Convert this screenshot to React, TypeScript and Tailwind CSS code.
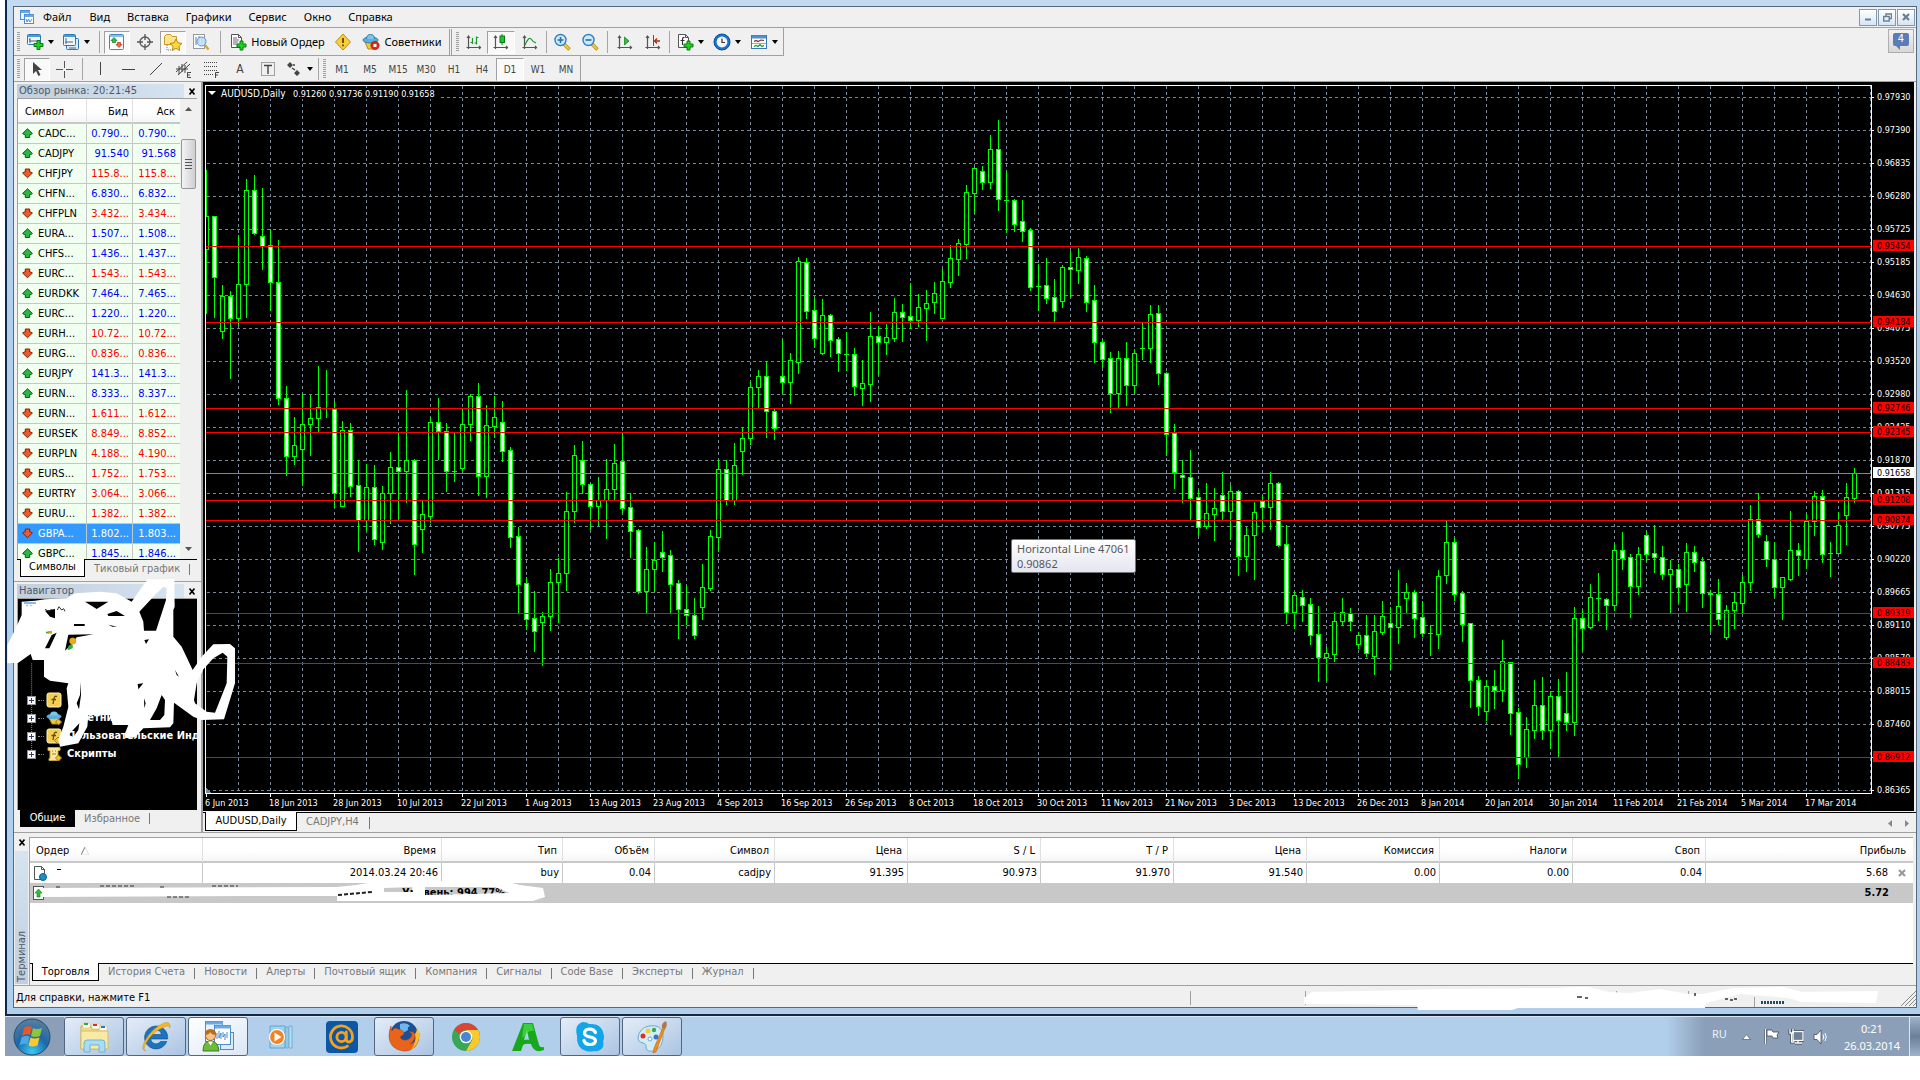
import React from "react";

const UI = "font-['DejaVu_Sans_Condensed','DejaVu_Sans',sans-serif]";
const SEGOE = "font-['Noto_Sans',sans-serif]";

/* ---------- chart data: [high, top, bottom, low, kind] ; kind 1 = bearish (filled), 0 = bullish ---------- */
type Bar = [number, number, number, number, number];
type Segment = { base: number; unit: number; bars: Bar[] };

const SEGMENTS: Segment[] = [
  {
    base: -2,
    unit: 2.45,
    bars: [
      [220, 332, 413, 571, 0], [332, 332, 482, 581, 1], [502, 528, 616, 632, 0], [517, 528, 582, 730, 1],
      [380, 500, 582, 600, 0], [243, 270, 501, 581, 0], [233, 270, 374, 377, 1], [265, 383, 406, 463, 1],
      [366, 405, 496, 563, 1], [392, 496, 778, 794, 1], [750, 778, 920, 968, 1], [826, 895, 920, 941, 0],
      [768, 844, 903, 992, 0], [771, 829, 844, 919, 0], [701, 802, 827, 862, 0], [710, 803, 803, 826, 0],
      [786, 805, 1013, 1045, 1], [835, 858, 1043, 1043, 0], [840, 858, 994, 1018, 1], [931, 993, 1079, 1154, 1],
      [941, 998, 1079, 1103, 0], [943, 998, 1124, 1137, 1], [995, 1013, 1133, 1149, 0], [911, 949, 1013, 1085, 0],
      [864, 949, 957, 1075, 1], [759, 932, 957, 1033, 0], [929, 932, 1138, 1210, 1], [1032, 1064, 1101, 1156, 0],
      [826, 839, 1067, 1083, 0], [779, 839, 861, 929, 1], [840, 861, 959, 1007, 1], [864, 958, 958, 982, 0],
      [807, 844, 950, 955, 0], [770, 775, 844, 881, 0], [742, 775, 969, 1017, 1], [796, 846, 969, 1022, 0],
      [775, 826, 847, 875, 0], [786, 839, 908, 933, 1], [899, 907, 1119, 1144, 1], [1095, 1118, 1234, 1303, 1],
      [1218, 1233, 1320, 1344, 1], [1252, 1319, 1351, 1399, 1], [1303, 1312, 1327, 1433, 0], [1198, 1230, 1312, 1347, 0],
      [1171, 1208, 1231, 1328, 0], [1009, 1056, 1209, 1249, 0], [894, 919, 1057, 1083, 0], [884, 932, 991, 1012, 1],
      [987, 991, 1043, 1100, 1], [973, 1030, 1043, 1090, 0], [929, 1001, 1030, 1122, 0], [892, 939, 1001, 1027, 0],
      [865, 934, 1048, 1058, 1], [1012, 1047, 1104, 1169, 1], [1100, 1103, 1253, 1258, 1], [1144, 1198, 1253, 1306, 0],
      [1131, 1177, 1199, 1252, 0], [1105, 1157, 1168, 1203, 1], [1151, 1164, 1234, 1306, 1], [1225, 1233, 1297, 1367, 1],
      [1239, 1297, 1311, 1333, 1], [1269, 1311, 1359, 1367, 1], [1186, 1243, 1290, 1321, 0], [1102, 1118, 1244, 1249, 0],
      [931, 954, 1119, 1154, 0], [931, 954, 1030, 1039, 1], [889, 944, 1030, 1039, 0], [853, 876, 910, 965, 0],
      [739, 751, 876, 892, 0], [710, 726, 751, 804, 0], [689, 726, 810, 875, 1], [805, 811, 852, 880, 1],
      [635, 724, 741, 764, 1], [670, 686, 741, 791, 0], [434, 444, 690, 718, 0], [436, 447, 565, 583, 1],
      [533, 564, 631, 655, 1], [537, 576, 668, 671, 0], [573, 576, 636, 676, 1], [630, 635, 670, 713, 1],
      [617, 671, 671, 710, 0], [657, 672, 749, 771, 1], [686, 743, 754, 796, 0], [568, 626, 744, 786, 0],
      [603, 626, 643, 720, 1], [598, 630, 643, 671, 0], [534, 569, 631, 639, 0], [549, 569, 580, 639, 1],
      [497, 578, 587, 607, 1], [524, 557, 588, 603, 0], [514, 547, 558, 637, 0], [495, 522, 545, 571, 0],
      [463, 493, 582, 582, 0], [404, 437, 494, 507, 0], [390, 400, 438, 478, 0], [257, 275, 401, 436, 0],
      [213, 216, 276, 325, 0], [211, 223, 251, 267, 1], [135, 170, 251, 265, 0], [98, 170, 291, 318, 1],
      [223, 293, 293, 372, 0], [292, 294, 354, 370, 1], [293, 346, 369, 394, 1], [363, 367, 506, 514, 1],
      [451, 504, 504, 563, 0], [436, 503, 533, 546, 1], [488, 532, 567, 590, 1], [453, 459, 541, 556, 0],
      [419, 459, 464, 530, 1], [412, 434, 465, 497, 0], [431, 437, 543, 567, 1], [502, 540, 643, 691, 1],
    ],
  },
  {
    base: 158,
    unit: 2.613,
    bars: [
      [259, 267, 310, 332, 1], [293, 309, 399, 449, 1], [290, 309, 399, 436, 0], [267, 309, 378, 431, 1],
      [285, 296, 378, 397, 0], [216, 283, 283, 311, 0], [170, 194, 282, 319, 0], [170, 192, 347, 376, 1],
      [345, 348, 506, 562, 1], [481, 504, 605, 648, 1], [576, 614, 620, 685, 1], [549, 619, 673, 732, 1],
      [653, 672, 749, 771, 1], [635, 713, 747, 753, 0], [648, 700, 715, 784, 0], [606, 667, 707, 732, 1],
      [640, 657, 707, 781, 0], [652, 657, 825, 875, 1], [749, 772, 825, 865, 0], [685, 711, 772, 886, 0],
      [666, 681, 697, 760, 1], [606, 635, 697, 755, 0], [632, 636, 796, 799, 1], [745, 795, 971, 1001, 1],
      [919, 928, 971, 1014, 0], [915, 934, 953, 996, 1], [936, 951, 1031, 1056, 1], [956, 1030, 1089, 1152, 1],
      [1064, 1080, 1089, 1151, 0], [972, 996, 1081, 1100, 0], [936, 973, 995, 1004, 0], [962, 974, 995, 1019, 1],
      [1023, 1033, 1055, 1066, 0], [980, 1033, 1078, 1087, 1], [980, 1022, 1087, 1134, 0], [943, 983, 1023, 1030, 0],
      [959, 1002, 1010, 1120, 1], [862, 957, 1010, 1053, 0], [896, 921, 935, 972, 0], [915, 921, 987, 1037, 1],
      [943, 986, 1026, 1035, 1], [1006, 1026, 1026, 1085, 0], [862, 879, 1029, 1066, 0], [734, 788, 875, 896, 0],
      [779, 788, 924, 941, 1], [917, 923, 1003, 1048, 1], [1001, 1002, 1151, 1219, 1], [1139, 1151, 1217, 1241, 1],
      [1149, 1166, 1230, 1254, 0], [1124, 1166, 1175, 1223, 1], [1046, 1101, 1175, 1205, 0], [1102, 1102, 1235, 1291, 1],
      [1223, 1234, 1370, 1406, 1], [1247, 1278, 1352, 1377, 0], [1150, 1216, 1280, 1301, 0],
    ],
  },
  {
    base: 338,
    unit: 3,
    bars: [
      [771, 856, 929, 957, 1], [814, 829, 929, 984, 0], [777, 829, 899, 1007, 1], [756, 880, 905, 930, 1],
      [561, 595, 905, 945, 0], [567, 595, 623, 690, 1], [492, 532, 622, 624, 0], [459, 534, 534, 600, 0],
      [534, 538, 554, 627, 1], [371, 391, 554, 570, 0], [336, 391, 413, 447, 1], [402, 412, 497, 591, 1],
      [381, 403, 499, 522, 0], [333, 346, 401, 420, 1], [315, 400, 412, 456, 1], [378, 412, 461, 477, 1],
      [420, 448, 461, 576, 0], [432, 448, 502, 546, 1], [369, 397, 493, 573, 0], [378, 397, 425, 454, 1],
      [411, 424, 518, 560, 1], [510, 518, 523, 634, 0], [477, 523, 596, 612, 1], [555, 571, 650, 657, 0],
      [516, 547, 571, 624, 0], [465, 487, 550, 576, 0], [255, 298, 487, 510, 0], [219, 298, 341, 350, 1],
      [345, 364, 418, 437, 1], [365, 418, 502, 532, 1], [471, 472, 502, 597, 0], [273, 391, 476, 480, 0],
      [369, 391, 406, 465, 1], [281, 304, 418, 443, 0], [213, 229, 304, 345, 0], [210, 229, 401, 426, 1],
      [366, 398, 398, 468, 0], [275, 316, 398, 400, 0], [189, 232, 284, 372, 0], [144, 160, 233, 245, 0],
    ],
  },
];

const CANDLES = SEGMENTS.flatMap((s) =>
  s.bars.map(([h, t, b, l, kind]) => ({
    high: Math.round(s.base + h / s.unit),
    top: Math.round(s.base + t / s.unit),
    bottom: Math.round(s.base + b / s.unit),
    low: Math.round(s.base + l / s.unit),
    bearish: kind === 1,
  })),
);

const PRICES = [
  "0.97930", "0.97390", "0.96835", "0.96280", "0.95725", "0.95185", "0.94630", "0.94075", "0.93520", "0.92980", "0.92425",
  "0.91870", "0.91315", "0.90775", "0.90220", "0.89665", "0.89110", "0.88570", "0.88015", "0.87460", "0.86905", "0.86365",
];
const DATES = [
  "6 Jun 2013", "18 Jun 2013", "28 Jun 2013", "10 Jul 2013", "22 Jul 2013", "1 Aug 2013", "13 Aug 2013", "23 Aug 2013",
  "4 Sep 2013", "16 Sep 2013", "26 Sep 2013", "8 Oct 2013", "18 Oct 2013", "30 Oct 2013", "11 Nov 2013", "21 Nov 2013",
  "3 Dec 2013", "13 Dec 2013", "26 Dec 2013", "8 Jan 2014", "20 Jan 2014", "30 Jan 2014", "11 Feb 2014", "21 Feb 2014",
  "5 Mar 2014", "17 Mar 2014",
];
const LEVELS: [number, string][] = [
  [164, "0.95454"], [240, "0.94184"], [326, "0.92746"], [350, "0.92345"], [418, "0.91208"],
  [438, "0.90874"], [531, "0.89319"], [581, "0.88483"], [675, "0.86912"],
];

function Chart() {
  return (
    <svg
      className="absolute inset-0 h-full w-full bg-black"
      viewBox="0 0 1711 729"
      preserveAspectRatio="none"
      role="img"
      aria-label="AUDUSD,Daily"
    >
      <g shapeRendering="crispEdges" fill="none">
        <g stroke="#778899" strokeDasharray="3 3">
          {Array.from({ length: 52 }, (_, i) => (
            <path key={i} d={`M${35.5 + 32 * i} 4V710`} />
          ))}
          {PRICES.map((p, i) => (
            <path key={p} d={`M4 ${15.5 + 33 * i}H1668`} />
          ))}
        </g>
        {CANDLES.map((c, i) => {
          const x = 3 + 8 * i;
          const h = c.bottom - c.top;
          return (
            <g key={i}>
              <path d={`M${x + 0.5} ${c.high}V${c.low + 1}`} stroke="#00ff00" />
              {h < 1 ? (
                <path d={`M${x - 2} ${c.top + 0.5}H${x + 3}`} stroke="#00ff00" />
              ) : (
                <rect x={x - 1.5} y={c.top + 0.5} width={4} height={h} stroke="#00ff00" fill={c.bearish ? "#ffffff" : "#000000"} />
              )}
            </g>
          );
        })}
        <path d="M3 391.5H1668" stroke="#778899" />
        {LEVELS.map(([y]) => (
          <path key={y} d={`M3 ${y + 0.5}H1668`} stroke="#ff0000" />
        ))}
        <path d="M0 4V729H3V4" fill="#000" />
        <path d="M2.5 711V3.5H1668.5V711.5H2" stroke="#fff" />
        {PRICES.map((p, i) => (
          <path key={p} d={`M1668 ${15.5 + 33 * i}h3`} stroke="#fff" />
        ))}
        {DATES.map((d, i) => (
          <path key={d} d={`M${3.5 + 64 * i} 712v3`} stroke="#fff" />
        ))}
        <path d="M3 705l5 6H3Z" fill="#778899" />
      </g>
      <g className={UI} fontSize="9" fill="#fff">
        {PRICES.map((p, i) => (
          <text key={p} x={1674} y={18 + 33 * i}>{p}</text>
        ))}
        {DATES.map((d, i) => (
          <text key={d} x={2 + 64 * i} y={724}>{d}</text>
        ))}
      </g>
      {LEVELS.map(([y, label]) => (
        <g key={label} className={UI} fontSize="9">
          <rect x={1670} y={y - 6} width={41} height={11} fill="#f00" shapeRendering="crispEdges" />
          <text x={1674} y={y + 3} fill="#000">{label}</text>
        </g>
      ))}
      <g className={UI} fontSize="9">
        <rect x={1670} y={385} width={41} height={11} fill="#fff" shapeRendering="crispEdges" />
        <text x={1674} y={394} fill="#000">0.91658</text>
      </g>
      <rect x="4" y="6" width="232" height="11" fill="#000" />
      <path d="M5 9h8l-4 4Z" fill="#fff" />
      <text className={UI} x="18" y="15" fontSize="10" fill="#fff">AUDUSD,Daily</text>
      <text className={UI} x="90" y="15" fontSize="9" fill="#fff">0.91260 0.91736 0.91190 0.91658</text>
    </svg>
  );
}

/* ---------- toolbar icons ---------- */
const Svg = ({ children, w = 18, h = 18, vb }: { children: React.ReactNode; w?: number; h?: number; vb?: string }) => (
  <svg width={w} height={h} viewBox={vb ?? `0 0 ${w} ${h}`} fill="none" aria-hidden="true" className="shrink-0">
    {children}
  </svg>
);
const Drop = () => (
  <Svg w={6} h={4}><path d="M0 0h6L3 4Z" fill="#000" /></Svg>
);
const Plus = ({ x, y }: { x: number; y: number }) => (
  <path transform={`translate(${x} ${y})`} d="M3.5 0.5h3v3h3v3h-3v3h-3v-3h-3v-3h3Z" fill="#1fd01f" stroke="#0a7d12" />
);
const IcNewChart = () => (
  <Svg><rect x="1.5" y="1.5" width="13" height="10" rx="1" fill="#eef5fc" stroke="#2a78b4" /><path d="M2 3h12" stroke="#4c9ad4" strokeWidth="2" /><path d="M4 5v5M3 8h9M4 6l-1 1M11 7l1 1-1 1" stroke="#54677a" /><Plus x={7.5} y={7} /></Svg>
);
const IcProfiles = () => (
  <Svg><rect x="4.5" y="5.500" width="12" height="11" rx="1" fill="#dbeaf8" stroke="#2a78b4" /><rect x="1.500" y="1.500" width="12" height="11" rx="1" fill="#eef5fc" stroke="#2a78b4" /><path d="M2 3h11" stroke="#4c9ad4" strokeWidth="2" /><path d="M4 5v6M3 9h8M7 15h7" stroke="#54677a" /></Svg>
);
const IcMarket = () => (
  <Svg><rect x="1.500" y="1.500" width="14" height="15" rx="1" fill="#fff" stroke="#3c88c8" /><path d="M2 3h13" stroke="#8cc0e8" strokeWidth="2" /><path d="M6 4.500l3 3H7.500v2h-3v-2H3Z" fill="#2fbf3a" stroke="#0a7d12" strokeWidth=".7" /><path d="M11 14.500l3-3h-1.500v-2h-3v2H8Z" fill="#f26a45" stroke="#b02a10" strokeWidth=".7" /></Svg>
);
const IcCross = () => (
  <Svg><circle cx="9" cy="9" r="5" stroke="#555" strokeWidth="1.300" /><path d="M9 1v6M9 11v6M1 9h6M11 9h6" stroke="#555" strokeWidth="1.300" /></Svg>
);
const IcNavigator = () => (
  <Svg w={20}><path d="M1.500 3.500l2-2h4l2 2h4v8h-12Z" fill="#ffe48a" stroke="#c9982a" /><path d="M4 12v5h5" stroke="#777" strokeDasharray="1 1" /><path d="M13 6l1.900 3.800 4.100.6-3 2.900.7 4.100-3.700-2-3.700 2 .7-4.100-3-2.900 4.100-.6Z" fill="#ffd83c" stroke="#b98712" /></Svg>
);
const IcTester = () => (
  <Svg><rect x="1.500" y="1.500" width="11" height="14" fill="#fdfdfd" stroke="#999" /><path d="M4 4v8M7 3v7M10 5v6" stroke="#5580a8" /><circle cx="9.500" cy="8.500" r="4.500" fill="#bfe3fa" fillOpacity=".8" stroke="#5a92c0" /><path d="M13 12l3.500 4.500" stroke="#d9a520" strokeWidth="2.200" /></Svg>
);
const IcOrder = ({ letter }: { letter?: boolean }) => (
  <Svg><path d="M2.500 1.500h7l3 3v10h-10Z" fill="#fff" stroke="#555" /><path d="M9.500 1.500v3h3" stroke="#555" />{letter ? <path d="M8.500 4.500q-2-.5-2 2V12M4.500 7.500h4" stroke="#333" strokeWidth="1.200" /> : <path d="M4 5h4M4 7h6M4 9h5M4 11h4" stroke="#667" />}<Plus x={7.500} y={7.500} /></Svg>
);
const IcWarn = () => (
  <Svg w={16}><path d="M8 1L15.500 9 8 17 .5 9Z" fill="#f7cf3a" stroke="#c28d10" /><path d="M8 5v5M8 11.500v1.800" stroke="#5b3d00" strokeWidth="1.700" /></Svg>
);
const IcAdvisor = () => (
  <Svg w={18}><path d="M3 9l3 7h5l3-7Z" fill="#f3c93c" stroke="#b98712" /><ellipse cx="8.500" cy="7" rx="7.500" ry="3" fill="#5cb0dc" stroke="#2d7dac" /><path d="M4.500 6q0-4.500 4-4.500t4 4.500" fill="#7cc6ea" stroke="#2d7dac" /><circle cx="13" cy="12.500" r="4.200" fill="#e0281c" stroke="#a5140c" strokeWidth=".6" /><rect x="11.500" y="11" width="3" height="3" fill="#fff" /></Svg>
);
const Axes = () => <path d="M3.500 3v13M1.500 14.500h14M2 5l1.500-2L5 5M14 13l1.500 1.500L14 16" stroke="#555" strokeWidth="1.200" />;
const IcBars = () => (
  <Svg><Axes /><path d="M7.500 5v6M7.500 9.500h-2M11.500 3.500v8M11.500 4.500h2M9.500 10h2" stroke="#159a2c" strokeWidth="1.200" /></Svg>
);
const IcCandles = () => (
  <Svg><Axes /><path d="M10 1v11" stroke="#0a7d12" /><rect x="8" y="3" width="4.500" height="6.500" fill="#1fc53a" stroke="#0a7d12" /></Svg>
);
const IcLine = () => (
  <Svg><Axes /><path d="M4 12Q8 3 10 6T15 10" stroke="#159a2c" strokeWidth="1.200" /></Svg>
);
const IcZoom = ({ plus }: { plus?: boolean }) => (
  <Svg><path d="M11 11l5.500 5.500" stroke="#b98712" strokeWidth="3.400" /><path d="M11 11l5 5" stroke="#f3cc45" strokeWidth="1.800" /><circle cx="7.500" cy="7" r="5.500" fill="#cdeafa" stroke="#2f80c2" strokeWidth="1.400" /><path d={plus ? "M4.500 7h6M7.500 4v6" : "M4.500 7h6"} stroke="#2b6da8" strokeWidth="1.600" /></Svg>
);
const IcScroll = () => (<Svg><Axes /><path d="M8.500 4l4.500 4-4.500 4Z" fill="#2fbf3a" stroke="#0a7d12" strokeWidth=".7" /></Svg>);
const IcShift = () => (<Svg><Axes /><path d="M9.500 2v11" stroke="#25649c" /><path d="M16 8h-5M13 5.500L10.500 8l2.500 2.500" stroke="#b02a10" strokeWidth="1.300" /></Svg>);
const IcClock = () => (<Svg><circle cx="9" cy="9" r="8" fill="#1d74cf" stroke="#0b4a94" /><circle cx="9" cy="9" r="5.400" fill="#f2f7fc" /><path d="M9 5.500V9.500h3" stroke="#333" strokeWidth="1.200" /></Svg>);
const IcTemplate = () => (<Svg><rect x="1.500" y="2.500" width="15" height="13" fill="#fff" stroke="#3a78b5" /><path d="M2 4h14" stroke="#4c90d0" strokeWidth="3" /><path d="M4 8.500l2-1 2 1 3-1.500 3 .5" stroke="#8b2a12" strokeWidth="1.200" /><path d="M2 10.500h14" stroke="#9ab" /><path d="M4 13.500l2-1 2 1 2-2 2 2 2-1" stroke="#159a2c" strokeWidth="1.200" /></Svg>);

type ToolProps = { label: string; w: string; pressed?: boolean; children: React.ReactNode };
const Tool = ({ label, w, pressed, children }: ToolProps) => (
  <button
    type="button"
    aria-label={label}
    className={`${w} flex h-[23px] shrink-0 items-center justify-center gap-[4px] ${pressed ? "border border-[#a0a0a0] border-r-white border-b-white bg-[#f9f9f9]" : ""}`}
  >
    {children}
  </button>
);
const Sep = ({ w }: { w: string }) => (
  <span className={`${w} flex h-[22px] shrink-0 justify-center`}><span className="h-full w-px bg-[#a5a5a5]" /></span>
);
const Grip = () => (
  <span className="flex h-[20px] w-2 shrink-0 justify-center">
    <span className="h-full w-[3px] bg-[repeating-linear-gradient(to_bottom,#a0a0a0_0px,#a0a0a0_1px,#f0f0f0_1px,#f0f0f0_2px)]" />
  </span>
);

function Toolbars() {
  return (
    <div className="flex h-[54px] shrink-0 items-start justify-between border-b border-[#a0a0a0]">
      <div className="flex flex-col">
        <div className="flex h-[28px] items-center border-r border-b border-[#a0a0a0] pt-px">
          <Grip />
          <Tool label="Новый график" w="w-9"><IcNewChart /><Drop /></Tool>
          <Tool label="Профили" w="w-9"><IcProfiles /><Drop /></Tool>
          <Sep w="w-[10px]" />
          <Tool label="Обзор рынка" w="w-[26px]" pressed><IcMarket /></Tool>
          <Tool label="Окно данных" w="w-[30px]"><IcCross /></Tool>
          <Tool label="Навигатор" w="w-[26px]" pressed><IcNavigator /></Tool>
          <Tool label="Тестер стратегий" w="w-[30px]"><IcTester /></Tool>
          <Sep w="w-2" />
          <Tool label="Новый Ордер" w="w-[106px]"><IcOrder /><span className={`${SEGOE} text-[11px]`}>Новый Ордер</span></Tool>
          <Tool label="MetaEditor" w="w-[26px]"><IcWarn /></Tool>
          <Tool label="Советники" w="w-[92px]"><IcAdvisor /><span className={`${SEGOE} text-[11px]`}>Советники</span></Tool>
          <span className="flex h-full w-[5px] justify-center gap-px"><span className="w-px bg-[#a0a0a0]" /><span className="w-px bg-[#a0a0a0]" /></span>
          <Grip />
          <Tool label="Бары" w="w-[26px]"><IcBars /></Tool>
          <Tool label="Японские свечи" w="w-[28px]" pressed><IcCandles /></Tool>
          <Tool label="Линия" w="w-[29px]"><IcLine /></Tool>
          <Sep w="w-[4px]" />
          <Tool label="Увеличить" w="w-[28px]"><IcZoom plus /></Tool>
          <Tool label="Уменьшить" w="w-[28px]"><IcZoom /></Tool>
          <Sep w="w-[6px]" />
          <Tool label="Автопрокрутка" w="w-[30px]"><IcScroll /></Tool>
          <Tool label="Сдвиг графика" w="w-[26px]"><IcShift /></Tool>
          <Sep w="w-[6px]" />
          <Tool label="Индикаторы" w="w-9"><IcOrder letter /><Drop /></Tool>
          <Tool label="Периоды" w="w-[37px]"><IcClock /><Drop /></Tool>
          <Tool label="Шаблоны" w="w-[38px]"><IcTemplate /><Drop /></Tool>
        </div>
        <div className="flex h-[25px] items-center self-start border-r border-[#a0a0a0] pt-px">
          <Grip />
          <span className="w-[2px]" />
          <Tool label="Курсор" w="w-[26px]" pressed><Svg><path d="M5 2v12l3-3 2.500 5 2-1-2.500-5H14Z" fill="#444" /></Svg></Tool>
          <Tool label="Перекрестие" w="w-[28px]"><Svg><path d="M9.500 1v7M9.500 11v7M1 9.500h7M11 9.500h7" stroke="#555" /></Svg></Tool>
          <Sep w="w-2" />
          <Tool label="Вертикальная линия" w="w-[28px]"><Svg><path d="M9.500 2v13" stroke="#444" /></Svg></Tool>
          <Tool label="Горизонтальная линия" w="w-[28px]"><Svg><path d="M3 9.500h13" stroke="#444" /></Svg></Tool>
          <Tool label="Трендовая линия" w="w-[28px]"><Svg><path d="M3 15L15 3" stroke="#444" /></Svg></Tool>
          <Tool label="Равноудаленный канал" w="w-[28px]"><Svg><path d="M1 12L12 2M3 15L15 4M4 6v8M7 4v8M10 5v8M1 9h12" stroke="#444" /><path d="M16 12.500h-3.500v5H16M12.500 15H15" stroke="#444" /></Svg></Tool>
          <Tool label="Линии Фибоначчи" w="w-[28px]"><Svg><path d="M1 2.500h14M1 6.500h14M1 10.500h14M1 14.500h9" stroke="#444" strokeDasharray="1 1" /><path d="M16 12.500h-3.500V18M12.500 15H15" stroke="#444" /></Svg></Tool>
          <Tool label="Текст" w="w-[28px]"><span className={`${UI} text-[12px] text-[#444]`}>A</span></Tool>
          <Tool label="Текстовая метка" w="w-[28px]"><Svg><rect x="2.500" y="2.500" width="13" height="13" stroke="#555" strokeDasharray="1 1" /><path d="M5 5.500h8M9 5v9" stroke="#444" strokeWidth="1.400" /></Svg></Tool>
          <Tool label="Стрелки" w="w-[34px]"><Svg><path d="M5 2l3 3-3 3-3-3ZM12 10l3 3-3 3-3-3Z" fill="#444" /><path d="M7 8l3 2M8 5h2" stroke="#444" strokeWidth="1.500" /></Svg><Drop /></Tool>
          <Sep w="w-[4px]" />
          <Grip />
          {["M1", "M5", "M15", "M30", "H1", "H4", "D1", "W1", "MN"].map((t) => (
            <Tool key={t} label={t} w="w-[28px]" pressed={t === "D1"}>
              <span className={`${UI} text-[10px] text-[#444]`}>{t}</span>
            </Tool>
          ))}
        </div>
      </div>
      <button type="button" aria-label="Сообщения" className="mt-[1px] mr-[2px] flex h-6 w-[26px] items-center justify-center border border-[#adadad] bg-linear-to-b from-[#f2f2f2] to-[#d8d8d8]">
        <span className="flex flex-col items-start">
          <span className={`${UI} flex h-[13px] w-4 items-center justify-center rounded-[2px] bg-[#5b7db5] text-[11px] text-white`}>4</span>
          <Svg w={8} h={4}><path d="M3 0h4v4Z" fill="#5b7db5" /></Svg>
        </span>
      </button>
    </div>
  );
}

/* ---------- left dock ---------- */
const QUOTES: [boolean, string, string, string][] = [
  [true, "CADC...", "0.790...", "0.790..."], [true, "CADJPY", "91.540", "91.568"], [false, "CHFJPY", "115.8...", "115.8..."],
  [true, "CHFN...", "6.830...", "6.832..."], [false, "CHFPLN", "3.432...", "3.434..."], [true, "EURA...", "1.507...", "1.508..."],
  [true, "CHFS...", "1.436...", "1.437..."], [false, "EURC...", "1.543...", "1.543..."], [true, "EURDKK", "7.464...", "7.465..."],
  [true, "EURC...", "1.220...", "1.220..."], [false, "EURH...", "10.72...", "10.72..."], [false, "EURG...", "0.836...", "0.836..."],
  [true, "EURJPY", "141.3...", "141.3..."], [true, "EURN...", "8.333...", "8.337..."], [false, "EURN...", "1.611...", "1.612..."],
  [false, "EURSEK", "8.849...", "8.852..."], [false, "EURPLN", "4.188...", "4.190..."], [false, "EURS...", "1.752...", "1.753..."],
  [false, "EURTRY", "3.064...", "3.066..."], [false, "EURU...", "1.382...", "1.382..."], [false, "GBPA...", "1.802...", "1.803..."],
  [true, "GBPC...", "1.845...", "1.846..."],
];

const Arrow = ({ up }: { up: boolean }) => (
  <Svg w={11} h={11}>
    {up ? (
      <path d="M5.500 .8L10.400 5.500 8.800 6.500H7.700V9.500H3.300V6.500H2.200L.6 5.500Z" fill="#2fb544" stroke="#0b5c18" />
    ) : (
      <path d="M5.500 9.700L10.400 5 8.800 4H7.700V1H3.300V4H2.200L.6 5Z" fill="#ee5a2c" stroke="#84200a" />
    )}
  </Svg>
);

const CloseX = () => (
  <Svg w={6} h={7}><path d="M.5 .5l5 6M5.500 .5l-5 6" stroke="#000" strokeWidth="1.600" /></Svg>
);

function DockTitle({ text }: { text: string }) {
  return (
    <div className="flex h-[14px] shrink-0 items-center pr-[6px] pl-[3px]">
      <h2 className="h-full flex-1 bg-linear-to-r from-[#c0cedd] to-[#d6e4f2] pl-[2px] text-[11px] leading-[14px] text-[#4c5966]">{text}</h2>
      <button type="button" aria-label="Закрыть" className="ml-[5px] flex w-[6px]"><CloseX /></button>
    </div>
  );
}

function MarketWatch() {
  return (
    <section className="flex min-h-0 flex-1 flex-col border-b border-[#a0a0a0] pt-[2px] pb-[3px]">
      <DockTitle text="Обзор рынка: 20:21:45" />
      <div className="mr-1 ml-[3px] flex min-h-0 flex-1 border-t border-l border-[#a0a0a0]">
        <div className="min-h-0 flex-1 overflow-hidden bg-[#f0fff0]">
          <table className="w-full table-fixed border-separate border-spacing-0 text-[11px] leading-[19px]">
            <colgroup><col className="w-[69px]" /><col className="w-[46px]" /><col /></colgroup>
            <thead>
              <tr className="h-[25px] bg-linear-to-b from-white from-50% to-[#f3f4f6] text-left">
                <th className="border-r border-b-2 border-r-[#dfe0e2] border-b-[#c8c8c8] p-0 pt-[2px] pl-[7px] font-normal">Символ</th>
                <th className="border-r border-b-2 border-r-[#dfe0e2] border-b-[#c8c8c8] p-0 pt-[2px] pr-[4px] text-right font-normal">Бид</th>
                <th className="border-b-2 border-[#c8c8c8] p-0 pt-[2px] pr-[5px] text-right font-normal">Аск</th>
              </tr>
            </thead>
            <tbody>
              {QUOTES.map(([up, s, b, a], i) => {
                const sel = i === 20;
                const tone = sel ? "text-white" : up ? "text-[#0000ff]" : "text-[#ff0000]";
                return (
                  <tr key={i} className={`h-5 ${sel ? "bg-[#3399ff] text-white" : "bg-[#f0fff0]"}`}>
                    <td className="border-r border-b border-[#c4c8c4] p-0 pl-1">
                      <span className="flex items-center gap-[5px]"><Arrow up={up} />{s}</span>
                    </td>
                    <td className={`border-r border-b border-[#c4c8c4] p-0 pr-[3px] text-right ${tone}`}>{b}</td>
                    <td className={`border-b border-[#c4c8c4] p-0 pr-[4px] text-right ${tone}`}>{a}</td>
                  </tr>
                );
              })}
            </tbody>
          </table>
        </div>
        <div className="flex w-[17px] flex-col items-center bg-[#f0f0f0] py-[8px]">
          <Svg w={7} h={4}><path d="M0 4h7L3.500 0Z" fill="#555" /></Svg>
          <div className="mt-[28px] flex h-[50px] w-[15px] flex-col items-center justify-center gap-[2px] rounded-[2px] border border-[#979797] bg-linear-to-r from-[#f4f4f4] to-[#cfcfd2]">
            {[0, 1, 2, 3].map((i) => <span key={i} className="h-px w-[7px] bg-[#555]" />)}
          </div>
          <span className="flex-1" />
          <Svg w={7} h={4}><path d="M0 0h7L3.500 4Z" fill="#555" /></Svg>
        </div>
      </div>
      <div className="mr-1 ml-[3px] flex h-[19px] shrink-0 items-start border-t border-black text-[11px]">
        <button type="button" className="-mt-px ml-[3px] flex h-[18px] w-[65px] items-center justify-center border border-t-0 border-black bg-white">Символы</button>
        <button type="button" className="ml-[9px] h-[18px] whitespace-nowrap text-[#777]">Тиковый график</button>
        <span className="mt-[4px] ml-[9px] h-[11px] w-px bg-[#777]" />
      </div>
    </section>
  );
}

const Expand = () => (
  <Svg w={9} h={9}><rect x=".5" y=".5" width="8" height="8" fill="#fff" stroke="#919191" /><path d="M2 4.500h5M4.500 2v5" stroke="#27408b" /></Svg>
);
const FIcon = ({ gem }: { gem?: boolean }) => (
  <Svg w={16} h={16}><rect x="1" y="1" width="14" height="14" rx="2" fill="#f3cf54" stroke="#fff3b8" /><path d="M11 4.500q-2.500-1-3 2L7 12M5.500 7.500h4.500" stroke="#5d4a10" strokeWidth="1.300" />{gem && <path d="M12 9l3.500 3.500L12 16l-3.500-3.500Z" fill="#f0c23a" stroke="#a87a10" />}</Svg>
);
const HatIcon = () => (
  <Svg w={16} h={16}><path d="M3 8l3 6h5l2-6Z" fill="#f3c93c" stroke="#b98712" /><ellipse cx="8" cy="6.500" rx="7.500" ry="2.800" fill="#5cb0dc" /><path d="M4 5.500q0-4 4-4t4 4" fill="#7cc6ea" /><path d="M12.500 9l3 3-3 3-3-3Z" fill="#f0c23a" stroke="#a87a10" /></Svg>
);
const ScrollIcon = () => (
  <Svg w={16} h={16}><path d="M2 1.500h12v3h-2v8h1v2H3v-2h1v-8H2Z" fill="#fbe9a0" stroke="#c9a23a" /><path d="M6 5h1M9 5h1M6 8h4" stroke="#a87a10" /><path d="M12.500 9l3 3-3 3-3-3Z" fill="#f0c23a" stroke="#a87a10" /></Svg>
);

function Navigator() {
  const items: [React.ReactNode, string][] = [
    [<FIcon />, ""],
    [<HatIcon />, "Советники"],
    [<FIcon gem />, "Пользовательские Индикаторы"],
    [<ScrollIcon />, "Скрипты"],
  ];
  return (
    <section className="flex h-[250px] shrink-0 flex-col pt-[2px]">
      <DockTitle text="Навигатор" />
      <div className="mr-1 ml-[3px] flex flex-1 flex-col overflow-hidden border-t border-l border-[#a0a0a0] bg-black pt-[92px]">
        <ul>
          {items.map(([icon, t], i) => (
            <li key={i} className="flex h-[18px] items-center pl-[9px] text-[11px] font-bold whitespace-nowrap text-white">
              <Expand />
              <span className="mx-[2px] w-[6px] shrink-0 border-t border-dotted border-[#888]" />
              {icon}
              <span className="ml-[5px]">{t}</span>
            </li>
          ))}
        </ul>
      </div>
      <div className="mr-1 ml-[3px] flex h-[22px] shrink-0 items-start text-[11px]">
        <button type="button" className="ml-[3px] flex h-[17px] w-[55px] items-center justify-center bg-black text-white">Общие</button>
        <button type="button" className="ml-[9px] h-[18px] text-[#777]">Избранное</button>
        <span className="mt-[3px] ml-[9px] h-[11px] w-px bg-[#777]" />
      </div>
    </section>
  );
}

function NavScribble() {
  return (
    <svg className="pointer-events-none absolute top-[478px] -left-[14px] z-10" width="240" height="190" viewBox="0 0 720 570" aria-hidden="true">
      <path
        fill="#fff"
        fillRule="evenodd"
        d="M22 255L45 210 65 165 65 125 105 122 135 118 200 115 225 100 300 95 350 100 395 125 430 75 445 58 523 58 524 140 520 150 520 230 545 260 578 330 605 290 640 253 690 252 705 265 705 370 672 478 605 480 580 470 522 428 520 490 510 502 430 505 405 532 375 535 375 520 385 495 338 495 330 465 265 465 262 500 235 550 180 560 175 540 190 500 205 440 200 385 205 370 150 362 132 350 132 300 98 300 92 282 55 308 22 310Z
        M255 125L325 125 290 147ZM322 162L350 153 375 168 325 168ZM222 192h32v6h-32ZM325 194l26 6h-14ZM135 152L165 147 165 175 150 170ZM418 155L465 105 490 80 500 85 498 120 468 212 432 212 430 185ZM433 240L447 238 438 252ZM135 265L155 225 170 218 148 265ZM205 224L280 223 230 232 218 250 195 272ZM525 330L537 350 530 345ZM610 328L640 295 668 278 682 290 680 370 645 458 620 455 585 430 582 420 590 370ZM243 365L243 405 237 448 230 430 240 405ZM205 525L238 490 235 510 220 530ZM413 372L430 370 415 388ZM432 415L437 430 433 445ZM485 405L495 420 493 465 480 480 450 480 470 445Z"
      />
      <path d="M72 127h36v4H72z" fill="#4f9be0" />
      <path d="M78 134h6v5h-6zM90 134h5v5h-5z" fill="#9cc8f0" />
      <path d="M144 213h12v8h-12z" fill="#e09a20" /><path d="M138 215h7v5h-7z" fill="#38a838" />
      <circle cx="218" cy="243" r="10" fill="#f0a820" stroke="#b97208" />
      <path d="M203 270q0-16 14-17l2 8q-4 8-16 9" fill="#2fae3a" />
      <path d="M135 148l12 6 8-6M172 150l5-10 8 10 6-4 4 8" stroke="#333" strokeWidth="3" fill="none" />
      <path d="M95 310V408M95 435V462M95 489V516M95 543V570" stroke="#888" strokeWidth="3" strokeDasharray="3 3" />
    </svg>
  );
}

/* ---------- terminal ---------- */
const HEAD = ["Ордер", "Время", "Тип", "Объём", "Символ", "Цена", "S / L", "T / P", "Цена", "Комиссия", "Налоги", "Своп", "Прибыль"];
const ROW = ["2014.03.24 20:46", "buy", "0.04", "cadjpy", "91.395", "90.973", "91.970", "91.540", "0.00", "0.00", "0.04"];

function Terminal() {
  return (
    <section className="relative flex h-[153px] shrink-0 border-t border-[#a0a0a0]">
      <div className="flex w-[15px] shrink-0 flex-col items-center pt-[6px]">
        <button type="button" aria-label="Закрыть" className="flex"><CloseX /></button>
        <h2 className="mt-[5px] mb-[1px] flex w-[13px] flex-1 rotate-180 items-center bg-linear-to-t from-[#d6e4f2] to-[#c0cedd] pt-[2px] text-[11px] leading-[13px] text-[#4c5966] [writing-mode:vertical-rl]">Терминал</h2>
      </div>
      <div className="mt-1 mr-[3px] flex min-w-0 flex-1 flex-col border-t border-l border-[#a0a0a0]">
        <div className="flex-1 bg-white">
          <table className="w-full table-fixed border-separate border-spacing-0 text-[11px] leading-[16px]">
            <colgroup>
              <col className="w-[173px]" /><col className="w-[239px]" /><col className="w-[121px]" /><col className="w-[92px]" />
              <col className="w-[120px]" /><col className="w-[133px]" /><col className="w-[133px]" /><col className="w-[133px]" />
              <col className="w-[133px]" /><col className="w-[133px]" /><col className="w-[133px]" /><col className="w-[133px]" /><col />
            </colgroup>
            <thead>
              <tr className="h-[25px] bg-linear-to-b from-white from-50% to-[#f3f4f6]">
                {HEAD.map((h, i) => (
                  <th key={i} className={`border-b-2 border-b-[#c8c8c8] p-0 pt-[2px] font-normal ${i === 12 ? "" : "border-r border-r-[#dfe0e2]"} ${i === 0 ? "pl-[6px] text-left" : i === 12 ? "pr-[7px] text-right" : "pr-[5px] text-right"}`}>
                    {i === 0 ? <span className="flex items-center gap-3">{h}<Svg w={8} h={8}><path d="M0 8L4 0" stroke="#777" /><path d="M4 0l4 8H0" stroke="#ddd" /></Svg></span> : h}
                  </th>
                ))}
              </tr>
            </thead>
            <tbody>
              <tr className="h-5">
                <td className="border-r border-[#c8c8c8] p-0 pl-[3px]">
                  <span className="flex items-start gap-[10px]">
                    <Svg w={14} h={16}><path d="M1.500 1.500h7l3 3v10h-10Z" fill="#fff" stroke="#555" /><path d="M8.500 1.500v3h3" stroke="#555" /><circle cx="10" cy="12" r="3.500" fill="#1790cc" stroke="#0b5f92" /></Svg>
                    <span className="mt-[4px] h-px w-[4px] bg-black" />
                  </span>
                </td>
                {ROW.map((c, i) => <td key={i} className="border-r border-[#c8c8c8] p-0 pr-[3px] text-right">{c}</td>)}
                <td className="p-0 pr-[7px]">
                  <span className="flex items-center justify-end gap-[10px]">5.68
                    <button type="button" aria-label="Закрыть ордер" className="flex"><Svg w={8} h={8}><path d="M1 1l6 6M7 1L1 7" stroke="#999" strokeWidth="2.200" /></Svg></button>
                  </span>
                </td>
              </tr>
              <tr className="h-5 bg-[#c8c8c8] font-bold">
                <td className="p-0 pl-[3px]">
                  <Svg w={14} h={14}><rect x=".5" y=".5" width="10" height="13" fill="#fff" stroke="#555" /><path d="M5.500 3l3.500 4H7v4H4V7H2Z" fill="#2fbf3a" stroke="#0a7d12" strokeWidth=".6" /></Svg>
                </td>
                <td colSpan={11} className="p-0 pl-[199px] whitespace-nowrap">Уровень: 994.77%</td>
                <td className="p-0 pr-[24px] text-right">5.72</td>
              </tr>
            </tbody>
          </table>
        </div>
        <div className="flex h-[22px] items-start border-t border-black text-[11px] leading-[16px]">
          <button type="button" className="-mt-px ml-[2px] flex h-[18px] w-[67px] items-center justify-center border border-t-0 border-black bg-white">Торговля</button>
          {["История Счета", "Новости", "Алерты", "Почтовый ящик", "Компания", "Сигналы", "Code Base", "Эксперты", "Журнал"].map((t) => (
            <React.Fragment key={t}>
              <button type="button" className="px-[9px] whitespace-nowrap text-[#777]">{t}</button>
              <span className="mt-[4px] h-[11px] w-px bg-[#777]" />
            </React.Fragment>
          ))}
        </div>
      </div>
      <svg className="pointer-events-none absolute top-[46px] left-[26px]" width="520" height="24" viewBox="0 0 520 24" aria-hidden="true">
        <path fill="#fff" d="M3 9L297 8 316 6 340 2 464 2 480 6 503 9 505 18 493 22 297 22 297 17 203 17 3 18ZM344 9L372 8 373 13 344 13ZM385 8L455 8 470 14 385 16Z" fillRule="evenodd" />
        <path d="M16 8h6M60 7h34M120 8h4M172 7h26M127 18h24" stroke="#333" strokeDasharray="4 2" />
        <path d="M298 16l34-3" stroke="#222" strokeWidth="2" strokeDasharray="4 2" />
      </svg>
    </section>
  );
}

function StatusBar() {
  return (
    <footer className={`${UI} relative flex h-[22px] shrink-0 items-center border-t border-[#a0a0a0] pt-[3px] pl-[2px] text-[11px]`}>
      <span className="flex-1">Для справки, нажмите F1</span>
      <span className="mr-[114px] h-[14px] w-px bg-[#a0a0a0]" />
      <span className="mr-[310px] h-[14px] w-px bg-[#a0a0a0]" />
      <span className="mr-[71px] h-[14px] w-px bg-[#a0a0a0]" />
      <span className="mr-[65px] h-[14px] w-px bg-[#a0a0a0]" />
      <span className="mr-[6px] h-[10px] w-px self-end bg-[#a0a0a0]" />
      <span className="mr-[117px] mb-[3px] h-[3px] w-[23px] self-end bg-[repeating-linear-gradient(to_right,#1c4f66_0px,#1c4f66_2px,#f0f0f0_2px,#f0f0f0_3px)]" />
      <svg className="pointer-events-none absolute right-[38px] -bottom-[3px]" width="574" height="24" viewBox="0 0 574 24" aria-hidden="true">
        <path fill="#fff" d="M0 12L8 6 60 5 145 3 255 2 270 1 285 1 305 6 326 7 356 3 384 8 398 8 430 2 480 1 498 6 574 5 572 17 498 16 484 12 436 8 402 17 401 22 214 22 208 24 114 24 113 19 0 18Z" />
        <path d="M273 11h5M281 12h3M421 13h3M426 14h3M430 13h3M391 7v3" stroke="#333" strokeWidth="1.500" />
      </svg>
      <Svg w={15} h={15}><path d="M0 15L15 0M4 15L15 4M8 15l7-7M12 15l3-3" stroke="#888" /></Svg>
    </footer>
  );
}

/* ---------- taskbar ---------- */
const tb = (children: React.ReactNode) => <Svg w={32} h={34} vb="0 0 32 34">{children}</Svg>;
const TASKS: [string, string, React.ReactNode][] = [
  ["Проводник", "on", tb(<><path d="M3 6h9l2 3h14v20H3Z" fill="#f0dc8c" stroke="#c9ae56" /><path d="M5 3h7v5H5zM14 4h8v5h-8zM21 6h8v5h-8z" fill="#fff" stroke="#d8c060" strokeWidth=".6" /><path d="M6 3h4v2H6z" fill="#2fae3a" /><path d="M15 4h4v2h-4z" fill="#d8321c" /><path d="M23 6h4v2h-4z" fill="#2a78d0" /><path d="M3 11h27v18H3Z" fill="#f7eaa6" stroke="#d5bd66" /><path d="M6 32v-9q0-3 3-3h15q3 0 3 3v9h-6v-7h-9v7Z" fill="#a9dcf4" stroke="#6db4da" /></>)],
  ["Internet Explorer", "on", tb(<><path fillRule="evenodd" d="M16 6a11.500 11.500 0 1 0 10.800 15.500h-6.200a5.500 5.500 0 0 1-10-2.500h17A11.500 11.500 0 0 0 16 6ZM10.600 14.500a5.500 5.500 0 0 1 10.800 0Z" fill="#1d74bd" stroke="#0c4a86" strokeWidth=".6" /><path d="M6 31Q0 30 5 21 12 8 24 3q7-2 6 5-.5-3.500-6-1Q12 12 6 23q-4 7 0 8" fill="#f5b820" stroke="#d08f0c" strokeWidth=".5" /></>)],
  ["MetaTrader", "active", tb(<><rect x="3.500" y="1.500" width="17" height="20" fill="#eaf3fb" stroke="#4a8ccc" /><path d="M4 3h17" stroke="#6aaae0" strokeWidth="3" /><rect x="18.500" y="12.500" width="13" height="17" fill="#dcebf8" stroke="#4a8ccc" /><rect x="12.500" y="5.500" width="16" height="19" fill="#fff" stroke="#4a8ccc" /><path d="M13 7h16" stroke="#6aaae0" strokeWidth="3" /><path d="M15 13v6M17 11v7l2-5v6M21 12v5l2-3v6M25 12v6" stroke="#4a8ccc" /><circle cx="8.500" cy="15.500" r="5" fill="#f4c48a" stroke="#a8641c" /><path d="M3 15q0-6 5.500-6t6 6q-5 0-6.500-3-1 3-5 3Z" fill="#c06a18" /><path d="M1 31q0-10 7.500-10T17 31Z" fill="#6fba3a" stroke="#3c7f16" /><path d="M6 21.500l2.500 4 2.500-4Z" fill="#fff" /></>)],
  ["Windows Media", "", tb(<><path d="M6 6h15v22H6Z" fill="#9fd3ef" stroke="#5ea5cc" /><path d="M22 7h2v21h-2zM25 6h3v22h-3z" fill="#b9def0" stroke="#5ea5cc" strokeWidth=".8" /><circle cx="13" cy="17" r="7.500" fill="#f58220" stroke="#fff" strokeWidth="1.200" /><path d="M10.500 12.500l7 4.500-7 4.500Z" fill="#fff" /></>)],
  ["Mail.Ru Агент", "", tb(<><rect x="0" y="1" width="32" height="32" rx="4" fill="#0b57a4" /><circle cx="15.500" cy="17" r="4.600" stroke="#f9a01b" strokeWidth="2.800" /><path d="M20.300 12v7q0 3 2.500 3 3.700-.5 3.700-5a11 11 0 1 0-5 9.200" stroke="#f9a01b" strokeWidth="2.800" strokeLinecap="round" /></>)],
  ["Firefox", "on", tb(<><circle cx="16" cy="15" r="14" fill="#1c4f94" /><path d="M12 4q7-2 10 2-3 1-2 4l-5 3q-4-2-3-9" fill="#6db7ea" /><path d="M3 6q0 3 1 5 1-2 3-3l6 2q3 1 3 4l-4 3q2 4 7 3 5-2 5-6-1-2-3-2 5-1 6 3 0 6-5 9 6-1 9-11 1 8-4 14-6 5-12 4Q2 29 1 17 1 10 3 6" fill="#e8641c" stroke="#b8400c" strokeWidth=".5" /><path d="M27 14q3-4 1-8 4 5 3 12-2 8-8 12 6-8 4-16" fill="#f9c22e" /></>)],
  ["Chrome", "", tb(<><circle cx="16" cy="17" r="14" fill="#3aa757" /><path d="M3.900 10A14 14 0 0 1 28.100 10H16Q11 10 10 14Z" fill="#dd4437" /><path d="M28.100 10A14 14 0 0 1 16 31l6-10.500Q24 14 16 10.500V10Z" fill="#fbc92d" /><circle cx="16" cy="17" r="6.300" fill="#fff" /><circle cx="16" cy="17" r="5" fill="#4a86cf" /></>)],
  ["Agent", "", tb(<><path fillRule="evenodd" d="M0 31L11 3h10l6 22q1 3 5 2v3q-10 4-13-6-5-1-8 1l-2 6ZM15 10l-3 10q3-1 5 0Z" fill="#17a81e" /><path d="M12 4h8l2 7q-6-1-9 5l-3 2Z" fill="#4be04a" fillOpacity=".7" /></>)],
  ["Skype", "on", tb(<><path d="M9 2q4 0 6 2 14-1 15 13 0 3-1 4 1 3 0 6-3 5-9 4-3 1-8 0Q2 28 3 16 0 4 9 2" fill="#12a5ea" /><path d="M21.500 12.500Q20 9 15.500 9 10.500 9.500 10.500 13q0 3 5.500 4t5.500 4q-.5 3.500-5.500 3.500-5 0-6-4" stroke="#fff" strokeWidth="3.200" strokeLinecap="round" /></>)],
  ["Paint", "on", tb(<><path d="M13 6Q25 4 27 14q1 14-10 17-6 1-7-3 1-4-3-5-5-1-5-5Q3 8 13 6" fill="#d4ecf8" stroke="#6aa8cc" /><circle cx="12" cy="11" r="2.500" fill="#f0d030" /><circle cx="18" cy="10" r="2.200" fill="#3aa757" /><circle cx="7" cy="16" r="2.500" fill="#d8321c" /><circle cx="20" cy="17" r="2.500" fill="#2a78d0" /><circle cx="14" cy="19" r="2" fill="#fff" stroke="#6aa8cc" /><path d="M27 7l2 1-9 24-3 1 1-5Z" fill="#f08c1c" stroke="#b8600c" strokeWidth=".5" /><path d="M26 8q-1-5 4-7 2 4-1 8Z" fill="#b07848" /></>)],
];

function Taskbar() {
  return (
    <nav className="flex h-10 shrink-0 items-stretch border-t border-[#d8e6f5] bg-[#b1cfeb]">
      <button type="button" aria-label="Пуск" className="flex w-[59px] items-center bg-[#8b9fb8] pl-2">
        <Svg w={38} h={38}>
          <defs><radialGradient id="orb" cx=".5" cy=".9" r=".9"><stop offset="0" stopColor="#35c8f5" /><stop offset=".5" stopColor="#1b68a8" /><stop offset="1" stopColor="#5d7f9e" /></radialGradient></defs>
          <circle cx="19" cy="19" r="18" fill="url(#orb)" stroke="#2a4a6a" />
          <path d="M11 10q3-3 8-1l-2 8q-4-2-8 1Z" fill="#e8582a" />
          <path d="M20 10q4 2 9 0l-2 8q-5 2-9 0Z" fill="#8cc63e" />
          <path d="M8.500 19.500q4-3 8-1l-2 8q-4-2-8 1Z" fill="#4aa8e8" />
          <path d="M17.500 19.500q4 2 9 0l-2 8q-5 2-9 0Z" fill="#fbc92d" />
        </Svg>
      </button>
      <div className="flex flex-1 gap-[2px] overflow-hidden">
        {TASKS.map(([name, state, icon]) => (
          <button
            key={name}
            type="button"
            aria-label={name}
            className={`flex w-[60px] shrink-0 items-center justify-center ${state === "on" ? "rounded-[3px] border border-[#52677f] bg-linear-to-br from-[#e4edf8] to-[#abc4e2]" : state === "active" ? "rounded-[3px] border border-[#52677f] bg-linear-to-br from-white to-[#dbe7f5]" : ""}`}
          >
            {icon}
          </button>
        ))}
      </div>
      <div className={`${SEGOE} flex w-[254px] items-center bg-linear-to-r from-[#b1cfeb] to-[#8b9fb8] to-15% text-[11px] text-white`}>
        <span className="ml-[46px] w-[30px] pb-[5px] text-[#eef3f8]">RU</span>
        <button type="button" aria-label="Скрытые значки" className="flex w-[21px]"><Svg w={9} h={6}><path d="M4.500 .5L8.500 5.500H.5Z" fill="#fff" stroke="#4b5b6d" strokeWidth=".7" /></Svg></button>
        <Svg w={17} h={17}><path d="M2.500 1v15" stroke="#3f4b59" strokeWidth="3" /><path d="M2.500 1v15" stroke="#fff" strokeWidth="1.500" /><path d="M4 2h5l1 2h6l-2 3 1 3h-5L9 8H4Z" fill="#fff" stroke="#3f4b59" strokeWidth=".8" /></Svg>
        <span className="w-2" />
        <Svg w={16} h={17}><path d="M5 3.500h10v9H5ZM2 1v4h3V1M3.500 5v9h3M7 15h7M10 13v2" stroke="#3f4b59" strokeWidth="3" /><rect x="5" y="3.500" width="10" height="9" fill="#6e8197" stroke="#fff" strokeWidth="1.300" /><path d="M2 1v4h3V1M3.500 5v9h3M7 15h7M10 13v2" stroke="#fff" strokeWidth="1.300" /></Svg>
        <span className="w-[9px]" />
        <Svg w={15} h={16}><path d="M1 5.500h3L8 1v14l-4-4.500H1Z" fill="#fff" stroke="#3f4b59" strokeWidth=".8" /><path d="M10 5.500q1.500 2.500 0 5M12 4q2.500 4 0 8" stroke="#fff" /></Svg>
        <span className="flex flex-1 flex-col items-center pl-[7px] leading-[17px]"><span>0:21</span><span>26.03.2014</span></span>
        <button type="button" aria-label="Показать рабочий стол" className="h-full w-[11px] border-l border-[#dfe8f2] bg-linear-to-b from-[#9fb2c8] via-[#6a8099] to-[#9fb2c8]" />
      </div>
    </nav>
  );
}

export default function App() {
  return (
    <div className={`${UI} flex h-screen min-h-[700px] flex-col overflow-hidden bg-white pb-6 pl-[5px] text-black`}>
      <div className="flex min-h-0 flex-1 flex-col border-b-2 border-l-2 border-b-[#16283e] border-l-[#0a2850] bg-[#b1cfeb] bg-linear-to-b from-[#c4daf0] to-[#b1cfeb] to-30% pt-[6px] pr-[3px] pb-[6px] pl-[6px]">
        <div className="relative flex min-h-0 flex-1 flex-col border border-[#56697d] bg-[#f0f0f0]">
          <header className="flex h-[21px] shrink-0 items-center border-b border-[#a0a0a0] pr-[1px] pl-[6px]">
            <Svg w={14} h={14}><rect x=".5" y=".5" width="9" height="9" fill="#eef5fc" stroke="#4c8fd8" /><path d="M1 2h9" stroke="#6aa8e4" strokeWidth="2" /><rect x="4.500" y="4.500" width="9" height="9" fill="#fff" stroke="#4c8fd8" /><path d="M5 6h9" stroke="#6aa8e4" strokeWidth="2" /><path d="M6 9l1 3 1.500-3L10 12l2-3" stroke="#4c8fd8" /></Svg>
            <nav className={`${SEGOE} flex flex-1 text-[11px]`}>
              {["Файл", "Вид", "Вставка", "Графики", "Сервис", "Окно", "Справка"].map((m) => (
                <button key={m} type="button" className="px-[9px] last:pl-[7px] [&:nth-child(n+3)]:pl-[8px]">{m}</button>
              ))}
            </nav>
            <div className="flex gap-px">
              <button type="button" aria-label="Свернуть" className="flex h-[17px] w-[18px] items-center justify-center border border-[#8497ab] bg-linear-to-b from-white to-[#d5e5f6]"><Svg w={8} h={8}><path d="M1 6.500h6" stroke="#6b7d90" strokeWidth="2" /></Svg></button>
              <button type="button" aria-label="Восстановить" className="flex h-[17px] w-[18px] items-center justify-center border border-[#8497ab] bg-linear-to-b from-white to-[#d5e5f6]"><Svg w={9} h={9}><path d="M3 3V1h5.500v4.500H6.500" stroke="#6b7d90" strokeWidth="1.400" /><rect x=".7" y="3.500" width="5.500" height="4.500" stroke="#6b7d90" strokeWidth="1.400" /></Svg></button>
              <button type="button" aria-label="Закрыть окно" className="flex h-[17px] w-[18px] items-center justify-center border border-[#8497ab] bg-linear-to-b from-white to-[#d5e5f6]"><Svg w={8} h={8}><path d="M1 1l6 6M7 1L1 7" stroke="#6b7d90" strokeWidth="2.200" /></Svg></button>
            </div>
          </header>
          <Toolbars />
          <main className="relative flex min-h-0 flex-1">
            <aside className="flex w-[187px] shrink-0 flex-col">
              <MarketWatch />
              <Navigator />
            </aside>
            <div className="flex min-w-0 flex-1 flex-col border-l-2 border-[#a0a0a0]">
              <div className="relative mr-[2px] min-h-0 flex-1">
                <Chart />
                <div className={`${SEGOE} absolute top-[457px] left-[808px] rounded-[2px] border border-[#767676] bg-linear-to-b from-white to-[#e4e5f0] px-[5px] py-px text-[11px] leading-[15px] whitespace-nowrap text-[#575757]`}>
                  Horizontal Line 47061<br />0.90862
                </div>
              </div>
              <div className="mt-px flex h-[20px] shrink-0 items-start border-t border-black text-[11px]">
                <button type="button" className="-mt-px ml-[2px] flex h-[19px] w-[92px] items-center justify-center border border-t-0 border-black bg-white pt-px">AUDUSD,Daily</button>
                <button type="button" className="ml-[9px] h-[19px] text-[#777]">CADJPY,H4</button>
                <span className="mt-[4px] ml-[10px] h-[12px] w-px bg-[#777]" />
                <span className="flex-1" />
                <span className="mt-[7px] mr-[7px] flex gap-[13px]">
                  <Svg w={4} h={7}><path d="M4 0v7L0 3.500Z" fill="#888" /></Svg>
                  <Svg w={4} h={7}><path d="M0 0v7l4-3.500Z" fill="#888" /></Svg>
                </span>
              </div>
            </div>
            <NavScribble />
          </main>
          <Terminal />
          <StatusBar />
        </div>
      </div>
      <Taskbar />
    </div>
  );
}
